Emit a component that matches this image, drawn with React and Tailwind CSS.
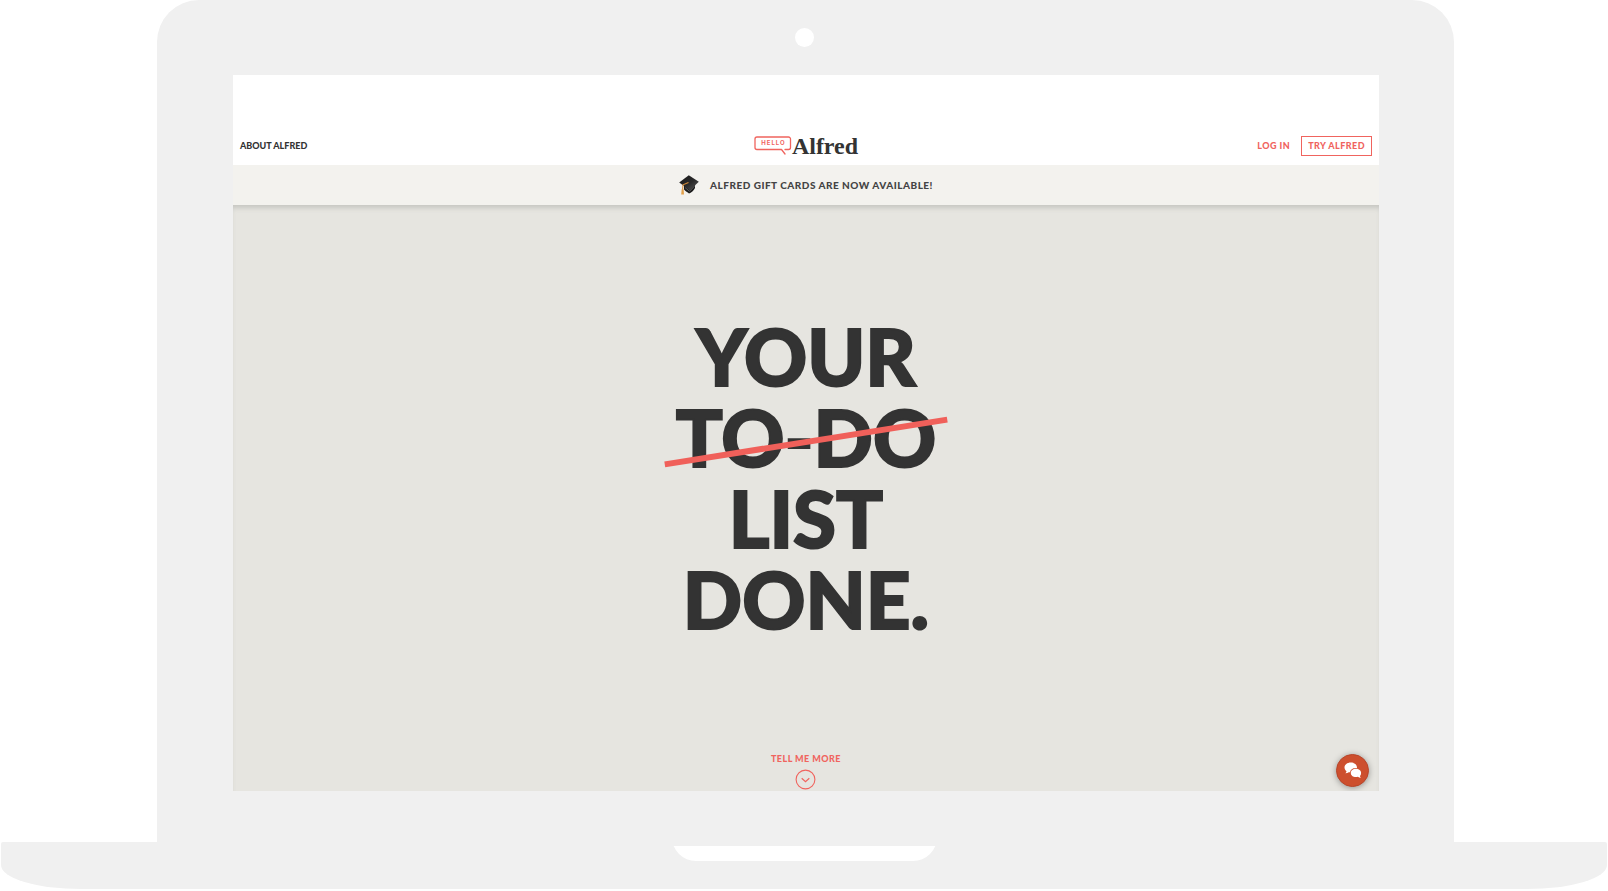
function HelloBubble() {
  return (
    <svg width="38" height="20" viewBox="0 0 38 20" fill="none" aria-hidden="true">
      <path
        d="M31 13.500h3.500a2 2 0 0 0 2-2v-8.500a2 2 0 0 0-2-2h-31.500a2 2 0 0 0-2 2v8.500a2 2 0 0 0 2 2h24.500l3.500 4.500"
        stroke="#f0645e"
        strokeWidth="1.300"
        strokeLinecap="round"
        strokeLinejoin="round"
      />
      <text
        x="19.500"
        y="9.400"
        textAnchor="middle"
        fontSize="6"
        letterSpacing="1"
        fontWeight="700"
        fontFamily="Inter, sans-serif"
        fill="#f0645e"
      >
        HELLO
      </text>
    </svg>
  );
}

function GraduationCap() {
  return (
    <svg width="20" height="20" viewBox="0 0 20 20" aria-hidden="true">
      <defs>
        <linearGradient id="board" x1="0" y1="0" x2="1" y2="1">
          <stop offset="0" stopColor="#151515" />
          <stop offset="0.55" stopColor="#2b2b2b" />
          <stop offset="1" stopColor="#5a5a5a" />
        </linearGradient>
      </defs>
      <path d="M5 9.500v5c1.500 2 3.500 2.500 5 4 2-.5 5-3 6-5.500V8z" fill="#1c1c1c" />
      <path d="M6 12.500l4.500 3.800L16 10.500" fill="none" stroke="#8a8a8a" strokeWidth="0.6" />
      <path d="M9.800.2L19.800 6.800 10.800 15.200.2 7.400z" fill="url(#board)" />
      <path d="M9.500 7.400L4 9.800l-.4 5" fill="none" stroke="#d58a35" strokeWidth="1.100" />
      <path d="M2.700 14.200h1.900l.4 5.200-2.800.2z" fill="#e2a04a" />
    </svg>
  );
}

function ChatIcon() {
  return (
    <svg width="18" height="17" viewBox="0 0 18 17" fill="#fff" aria-hidden="true">
      <path d="M6.800.6C3.200.6.500 2.800.5 5.500c0 1.500.8 2.800 2 3.700-.1.900-.6 1.600-1.200 2.100 1.400 0 2.600-.4 3.500-1.100.4.100.8.100 1.200.1C6.300 7.800 8.600 6 11.500 6c.5 0 1 0 1.500.1C13.200 2.900 10.300.6 6.800.6z" />
      <path d="M11.900 6.700c-2.900 0-5.100 1.900-5.100 4.200s2.200 4.200 5.100 4.200c.7 0 1.300-.1 1.900-.3.900.7 2 1.200 3.100 1.200-.5-.6-.8-1.300-.9-2.100.7-.8 1.100-1.800 1.100-3 0-2.300-2.300-4.200-5.200-4.200z" />
    </svg>
  );
}

function NavBar() {
  return (
    <header className="flex h-[90px] items-end bg-white px-[7px] pb-[7px] text-[9px] font-black">
      <div className="grid w-full grid-cols-3 items-center">
        <a href="#about" className="justify-self-start leading-3 text-[#333]">
          ABOUT ALFRED
        </a>
        <a href="#home" className="flex items-center justify-self-center" aria-label="Hello Alfred">
          <HelloBubble />
          <span className="font-['Liberation_Serif',serif] text-[24px] leading-6 font-bold text-[#333]">
            Alfred
          </span>
        </a>
        <div className="flex items-center gap-[11px] justify-self-end text-[#f0645e]">
          <a href="#login" className="leading-3 tracking-wider">
            LOG IN
          </a>
          <button
            type="button"
            className="h-5 border border-[#f0645e] px-[6px] leading-3 font-black tracking-wider"
          >
            TRY ALFRED
          </button>
        </div>
      </div>
    </header>
  );
}

function Hero() {
  return (
    <main className="relative flex h-[586px] flex-col items-center justify-between bg-[#e6e5e0] pt-[111px] pb-px shadow-[inset_0_5px_5px_-2px_#c6c6c1]">
      <h1 className="text-center text-[78px] leading-[81px] font-black text-[#333] [-webkit-text-stroke:2px_#333]">
        YOUR
        <br />
        <span className="relative inline-block">
          TO-DO
          <span className="absolute top-[55%] left-1/2 h-[6px] w-[286px] -translate-x-1/2 -translate-y-1/2 -rotate-9 bg-[#f0605a]" />
        </span>
        <br />
        LIST
        <br />
        DONE.
      </h1>
      <a
        href="#more"
        className="flex flex-col items-center gap-1 text-[9px] leading-3 font-black tracking-wider text-[#f0645e]"
      >
        TELL ME MORE
        <svg width="21" height="21" viewBox="0 0 21 21" fill="none" stroke="#f0645e" aria-hidden="true">
          <circle cx="10.500" cy="10.500" r="9.400" strokeWidth="1.100" />
          <path d="M6.700 9.200l3.800 3.400 3.800-3.400" strokeWidth="1.200" />
        </svg>
      </a>
      <button
        type="button"
        aria-label="Open chat"
        className="absolute right-[10px] bottom-1 flex size-[33px] items-center justify-center rounded-full border border-[#b8452a] bg-[#cd4f2e] shadow-[0_1px_6px_rgba(0,0,0,0.35)]"
      >
        <ChatIcon />
      </button>
    </main>
  );
}

export default function App() {
  return (
    <div className="bg-white px-px pb-[2px] font-[Lato,sans-serif]">
      <div className="mr-[153px] ml-[156px] flex flex-col items-center rounded-t-[42px] bg-[#f0f0f0] pr-[75px] pb-[51px] pl-[76px]">
        <div className="flex h-[75px] items-center pr-1">
          <div className="size-[19px] rounded-full bg-white" />
        </div>
        <div className="w-full overflow-hidden">
          <NavBar />
          <div className="flex h-10 items-center justify-center gap-[11px] bg-[#f3f2ee] text-[10px] leading-3 font-black text-[#444]">
            <GraduationCap />
            <p className="tracking-wider">ALFRED GIFT CARDS ARE NOW AVAILABLE!</p>
          </div>
          <Hero />
        </div>
      </div>
      <div className="flex h-[47px] justify-center bg-[#f0f0f0] pt-1 [border-radius:2px_2px_80px_80px/2px_2px_24px_24px]">
        <div className="flex h-[15px] items-end overflow-hidden">
          <div className="h-10 w-[265px] rounded-b-[24px] bg-white" />
        </div>
      </div>
    </div>
  );
}
